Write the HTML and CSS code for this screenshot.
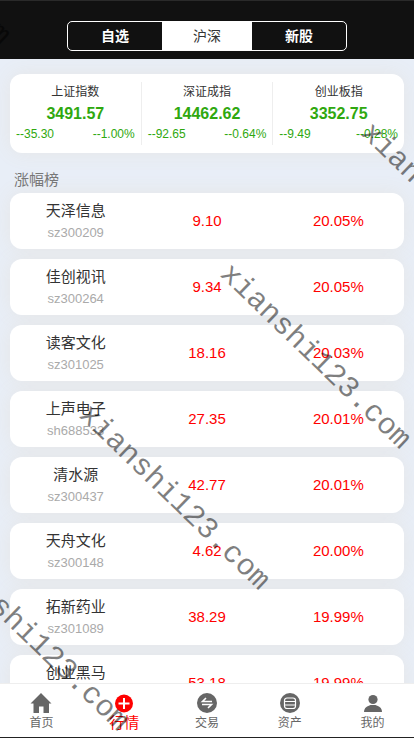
FILE: index.html
```html
<!DOCTYPE html>
<html lang="zh-CN">
<head>
<meta charset="utf-8">
<meta name="viewport" content="width=device-width, initial-scale=1">
<title>沪深</title>
<link rel="stylesheet" href="styles.css">
</head>
<body>
<header class="topbar">
  <div class="segments">
    <button class="segment" type="button">自选</button>
    <button class="segment segment-active" type="button">沪深</button>
    <button class="segment" type="button">新股</button>
  </div>
</header>

<main class="content">
  <section class="indices">
    <article class="index">
      <h2 class="index-name">上证指数</h2>
      <strong class="index-value">3491.57</strong>
      <div class="index-change"><span>--35.30</span><span>--1.00%</span></div>
    </article>
    <article class="index">
      <h2 class="index-name">深证成指</h2>
      <strong class="index-value">14462.62</strong>
      <div class="index-change"><span>--92.65</span><span>--0.64%</span></div>
    </article>
    <article class="index">
      <h2 class="index-name">创业板指</h2>
      <strong class="index-value">3352.75</strong>
      <div class="index-change"><span>--9.49</span><span>--0.28%</span></div>
    </article>
  </section>

  <h1 class="list-title">涨幅榜</h1>
  <table class="stocks">
    <tbody>
      <tr><th scope="row">天泽信息<small>sz300209</small></th><td>9.10</td><td>20.05%</td></tr>
      <tr><th scope="row">佳创视讯<small>sz300264</small></th><td>9.34</td><td>20.05%</td></tr>
      <tr><th scope="row">读客文化<small>sz301025</small></th><td>18.16</td><td>20.03%</td></tr>
      <tr><th scope="row">上声电子<small>sh688533</small></th><td>27.35</td><td>20.01%</td></tr>
      <tr><th scope="row">清水源<small>sz300437</small></th><td>42.77</td><td>20.01%</td></tr>
      <tr><th scope="row">天舟文化<small>sz300148</small></th><td>4.62</td><td>20.00%</td></tr>
      <tr><th scope="row">拓新药业<small>sz301089</small></th><td>38.29</td><td>19.99%</td></tr>
      <tr><th scope="row">创业黑马</th><td>53.18</td><td>19.99%</td></tr>
    </tbody>
  </table>
</main>

<nav class="tabbar">
  <a class="tab" href="#home">
    <svg class="tab-icon" viewBox="0 0 20 20"><path fill="currentColor" d="M10 0 20.500 10.500H18V20H12.500V13.500H8V20H2.500V10.500H-.5z"/></svg>
    <span>首页</span>
  </a>
  <a class="tab tab-active" href="#market">
    <svg class="tab-icon" viewBox="0 0 20 20"><circle cx="10" cy="10.500" r="9" fill="currentColor"/><path d="M10 5v11M4.500 10.500h11" stroke="#fff" stroke-width="2"/></svg>
    <span>行情</span>
  </a>
  <a class="tab" href="#trade">
    <svg class="tab-icon" viewBox="0 0 20 20"><circle cx="10" cy="10" r="10" fill="currentColor"/><path d="M15 8.500H5.500L9 5M5 11.500h9.500L11 15" fill="none" stroke="#fff" stroke-width="1.600"/></svg>
    <span>交易</span>
  </a>
  <a class="tab" href="#assets">
    <svg class="tab-icon" viewBox="0 0 20 20"><circle cx="10" cy="10" r="10" fill="currentColor"/><rect x="4.500" y="5" width="11" height="10.500" rx="2.500" fill="none" stroke="#fff" stroke-width="1.200"/><path d="M4.500 8.500h11M4.500 12h11" stroke="#fff" stroke-width="1.200"/></svg>
    <span>资产</span>
  </a>
  <a class="tab" href="#me">
    <svg class="tab-icon" viewBox="0 0 20 20"><circle cx="10" cy="6.500" r="4.600" fill="currentColor"/><path fill="currentColor" d="M1 19c0-4.500 3.500-6 6.500-7h5c3 1 6.500 2.500 6.500 7z"/></svg>
    <span>我的</span>
  </a>
</nav>

<svg class="watermark" aria-hidden="true">
  <text transform="translate(-181 -129) rotate(44)">xianshi123.com</text>
  <text transform="translate(360 134) rotate(44)">xianshi123.com</text>
  <text transform="translate(219 275) rotate(44)">xianshi123.com</text>
  <text transform="translate(78 416) rotate(44)">xianshi123.com</text>
  <text transform="translate(-63 557) rotate(44)">xianshi123.com</text>
</svg>
</body>
</html>
```
FILE: styles.css
```css
* {
  box-sizing: border-box;
}

body {
  display: flex;
  flex-direction: column;
  height: 100vh;
  margin: 0;
  overflow: hidden;
  background: #e8eef7;
  color: #333;
  font-family: "Liberation Sans", "Noto Sans CJK SC", sans-serif;
}

.topbar {
  flex: none;
  padding: 20px 67px 8px;
  border-top: 1px solid #2a2a2a;
  background: #111;
}

.segments {
  display: flex;
  height: 30px;
  overflow: hidden;
  border: 1px solid #fff;
  border-radius: 5px;
}

.segment {
  flex: 1;
  padding: 0;
  border: 0;
  background: transparent;
  color: #fff;
  font: bold 14px/28px "Liberation Sans", "Noto Sans CJK SC", sans-serif;
}

.segment-active {
  flex: 0 0 90px;
  background: #fff;
  color: #333;
  font-weight: normal;
}

.content {
  flex: 1;
  min-height: 0;
  padding: 15px 10px 0;
  overflow: hidden;
}

.indices {
  display: flex;
  padding: 8px 0;
  border-radius: 12px;
  background: #fff;
  box-shadow: 0 0 20px #e6e6e6;
}

.index {
  flex: 1;
  min-width: 0;
  padding: 0 6px;
  text-align: center;
}

.index + .index {
  border-left: 1px solid #eee;
}

.index-name {
  margin: 0;
  font-size: 12px;
  font-weight: normal;
  line-height: 20px;
}

.index-value {
  display: block;
  color: #2fa80f;
  font-size: 16px;
  line-height: 24px;
}

.index-change {
  display: flex;
  justify-content: space-between;
  padding-bottom: 3px;
  color: #2fa80f;
  font-size: 12px;
  line-height: 16px;
}

.list-title {
  margin: 16px 4px 0;
  color: #777;
  font-size: 15px;
  font-weight: normal;
  line-height: 22px;
}

.stocks {
  width: 100%;
  margin-top: -8px;
  border-spacing: 0 10px;
  table-layout: fixed;
}

.stocks tr {
  height: 56px;
  border-radius: 12px;
  box-shadow: 0 0 20px #e6e6e6;
}

.stocks th,
.stocks td {
  position: relative;
  padding: 0 0 2px;
  background: #fff;
  color: #f00;
  font-size: 15px;
  font-weight: normal;
  text-align: center;
}

.stocks th {
  padding: 7px 0 0;
  border-radius: 12px 0 0 12px;
  color: #333;
  line-height: 22px;
  vertical-align: top;
}

.stocks td:last-child {
  border-radius: 0 12px 12px 0;
}

.stocks small {
  display: block;
  color: #aaa;
  font-size: 13px;
}

.tabbar {
  position: relative;
  display: flex;
  flex: none;
  height: 55px;
  padding-top: 9px;
  border-top: 1px solid #eee;
  border-bottom: 1px solid #222;
  background: #fff;
}

.tab {
  display: flex;
  flex: 1;
  flex-direction: column;
  align-items: center;
  color: #666;
  font-size: 12px;
  line-height: 20px;
  text-decoration: none;
}

.tab-active {
  color: #f00;
  font-size: 15px;
}

.tab-icon {
  width: 20px;
  height: 20px;
  overflow: visible;
}

.watermark {
  position: absolute;
  top: 0;
  left: 0;
  width: 100%;
  height: 100%;
  pointer-events: none;
  fill: rgba(0, 0, 0, 0.5);
  font-family: "Liberation Mono", monospace;
  font-size: 30px;
}
```
